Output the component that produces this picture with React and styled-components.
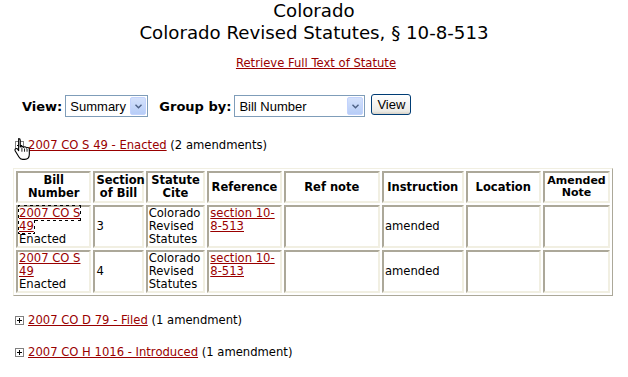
import styled, { createGlobalStyle } from "styled-components";

const GlobalStyle = createGlobalStyle`
  html, body {
    margin: 0;
    padding: 0;
    background: #ffffff;
  }
  body {
    font-family: "DejaVu Sans", Verdana, sans-serif;
    font-size: 12px;
    color: #000000;
  }
`;

const rows = [
  { bill: "2007 CO S 49", section: "3", focused: true },
  { bill: "2007 CO S 49", section: "4" },
];

const columns = [
  { label: "Bill\nNumber", width: 72 },
  { label: "Section\nof Bill", width: 48 },
  { label: "Statute\nCite", width: 57 },
  { label: "Reference", width: 71 },
  { label: "Ref note", width: 92 },
  { label: "Instruction", width: 78 },
  { label: "Location", width: 72 },
  { label: "Amended\nNote", width: 64, small: true },
];

const others = [
  { label: "2007 CO D 79 - Filed", count: "(1 amendment)" },
  { label: "2007 CO H 1016 - Introduced", count: "(1 amendment)" },
];

const PlusIcon = () => (
  <svg width="9" height="9" viewBox="0 0 9 9">
    <rect x="0.5" y="0.5" width="8" height="8" fill="#fff" stroke="#808080" />
    <path d="M2 4.5h5M4.5 2v5" stroke="#000" strokeWidth="1" />
  </svg>
);

const HandCursor = () => (
  <svg width="20" height="24" viewBox="0 0 18 22">
    <path
      d="M5 1.5c.9 0 1.5.6 1.5 1.5v6.2c.3-.5.8-.8 1.4-.8.8 0 1.3.5 1.5 1.1.3-.4.7-.6 1.3-.6.8 0 1.3.5 1.5 1.2.3-.3.6-.5 1.1-.5.9 0 1.5.7 1.5 1.6v4.6c0 2.7-1.6 4.7-4.3 4.7H8.6c-1.5 0-2.6-.8-3.3-2.1L1.9 12.8c-.5-.8-.3-1.6.4-2 .7-.4 1.5-.1 2 .6l.7 1.1V3c0-.9.1-1.5 0-1.5z"
      fill="#fff"
      stroke="#000"
      strokeWidth="1"
      strokeLinejoin="round"
    />
    <path d="M8 9.5v4M10.4 10.5v3M12.7 11v2.5" stroke="#000" strokeWidth="0.8" />
  </svg>
);

const SelectArrow = () => (
  <svg width="7" height="5" viewBox="0 0 7 5">
    <path d="M0.5 0.8l3 3 3-3" fill="none" stroke="#4d6185" strokeWidth="1.4" />
  </svg>
);

const FakeSelect = ({ value, width }) => (
  <SelectBox $width={width}>
    <SelectValue>{value}</SelectValue>
    <SelectButton>
      <SelectArrow />
    </SelectButton>
  </SelectBox>
);

const App = () => {
  return (
    <Page>
      <GlobalStyle />
      <Heading>
        Colorado
        <br />
        Colorado Revised Statutes, § 10-8-513
      </Heading>
      <Centered>
        <Link href="#">Retrieve Full Text of Statute</Link>
      </Centered>

      <Controls>
        <Label>View:</Label>
        <FakeSelect value="Summary" width={83} />
        <Label $gap>Group by:</Label>
        <FakeSelect value="Bill Number" width={131} />
        <ViewButton>View</ViewButton>
      </Controls>

      <GroupLine $first>
        <Toggle>
          <PlusIcon />
          <Cursor>
            <HandCursor />
          </Cursor>
        </Toggle>
        <Link href="#">2007 CO S 49 - Enacted</Link>
        {" (2 amendments)"}
      </GroupLine>

      <Table>
        <colgroup>
          {columns.map((c) => (
            <col key={c.label} style={{ width: c.width }} />
          ))}
        </colgroup>
        <thead>
          <tr>
            {columns.map((c) => (
              <Th key={c.label} $small={c.small}>
                {c.label.split("\n").map((part, i) => (
                  <span key={i}>
                    {i > 0 && <br />}
                    {part}
                  </span>
                ))}
              </Th>
            ))}
          </tr>
        </thead>
        <tbody>
          {rows.map((r, i) => (
            <tr key={i}>
              <Td>
                <BillLink href="#" $focused={r.focused}>
                  {r.bill}
                </BillLink>
                <br />
                Enacted
              </Td>
              <Td>{r.section}</Td>
              <Td>
                Colorado
                <br />
                Revised
                <br />
                Statutes
              </Td>
              <Td $top>
                <Link href="#">section 10-8-513</Link>
              </Td>
              <Td />
              <Td>amended</Td>
              <Td />
              <Td />
            </tr>
          ))}
        </tbody>
      </Table>

      {others.map((o) => (
        <GroupLine key={o.label}>
          <Toggle>
            <PlusIcon />
          </Toggle>
          <Link href="#">{o.label}</Link>
          {" " + o.count}
        </GroupLine>
      ))}
    </Page>
  );
};

const Page = styled.div`
  width: 628px;
  height: 377px;
  overflow: hidden;
  padding: 0 13px;
  box-sizing: border-box;
`;

const Heading = styled.h1`
  margin: 0;
  text-align: center;
  font-weight: normal;
  font-size: 18.2px;
  line-height: 22px;
`;

const Centered = styled.div`
  text-align: center;
  margin-top: 12px;
  font-size: 11.6px;
  padding-left: 4px;
`;

const Link = styled.a`
  color: #990000;
  text-decoration: underline;
`;

const BillLink = styled(Link)`
  outline: ${(p) => (p.$focused ? "1px dotted #000" : "none")};
`;

const Controls = styled.div`
  display: flex;
  align-items: center;
  margin-top: 25px;
  padding-left: 9px;
  height: 22px;
`;

const Label = styled.span`
  font-weight: bold;
  font-size: 13px;
  margin-left: ${(p) => (p.$gap ? "11px" : "0")};
  margin-right: 3px;
`;

const SelectBox = styled.div`
  display: flex;
  align-items: center;
  width: ${(p) => p.$width}px;
  height: 22px;
  box-sizing: border-box;
  border: 1px solid #7f9db9;
  background: #fff;
  padding: 1px;
`;

const SelectValue = styled.span`
  flex: 1;
  font-family: "Liberation Sans", Arial, sans-serif;
  font-size: 13px;
  padding-left: 3px;
  white-space: nowrap;
`;

const SelectButton = styled.span`
  width: 16px;
  height: 18px;
  display: flex;
  align-items: center;
  justify-content: center;
  background: linear-gradient(#d4e1fb, #b7cdf7);
  border: 1px solid #c3d3fd;
  box-sizing: border-box;
  border-radius: 2px;
`;

const ViewButton = styled.button`
  margin-left: 6px;
  height: 21px;
  width: 40px;
  padding: 0;
  font-family: "Liberation Sans", Arial, sans-serif;
  font-size: 13px;
  color: #000;
  background: linear-gradient(#ffffff, #ecebe6 85%, #d6d0c5);
  border: 1px solid #003c74;
  border-radius: 3px;
  margin-top: -3px;
`;

const GroupLine = styled.div`
  margin-top: ${(p) => (p.$first ? "20px" : "16px")};
  padding-left: 2px;
  height: 16px;
  line-height: 16px;
  font-size: 11.6px;
  white-space: nowrap;
`;

const Toggle = styled.span`
  position: relative;
  display: inline-block;
  width: 9px;
  height: 9px;
  margin-right: 4px;
  vertical-align: -1px;
`;

const Cursor = styled.span`
  position: absolute;
  left: -2px;
  top: -1px;
`;

const Table = styled.table`
  margin-top: 15px;
  margin-bottom: 4px;
  width: 600px;
  table-layout: fixed;
  border-collapse: separate;
  border-spacing: 2px;
  border: 1px solid;
  border-color: #f1efe2 #aca899 #aca899 #f1efe2;
  font-size: 11.6px;
`;

const Th = styled.th`
  border: 2px solid;
  border-color: #aca899 #f1efe2 #f1efe2 #aca899;
  font-weight: bold;
  font-size: ${(p) => (p.$small ? "11px" : "11.5px")};
  line-height: ${(p) => (p.$small ? "12px" : "13px")};
  height: 25px;
  padding: 1px;
  text-align: center;
  vertical-align: middle;
`;

const Td = styled.td`
  border: 2px solid;
  border-color: #aca899 #f1efe2 #f1efe2 #aca899;
  padding: 0 1px;
  height: 39px;
  line-height: 13px;
  font-size: 11.6px;
  vertical-align: ${(p) => (p.$top ? "top" : "middle")};
  word-wrap: break-word;
`;

export default App;
